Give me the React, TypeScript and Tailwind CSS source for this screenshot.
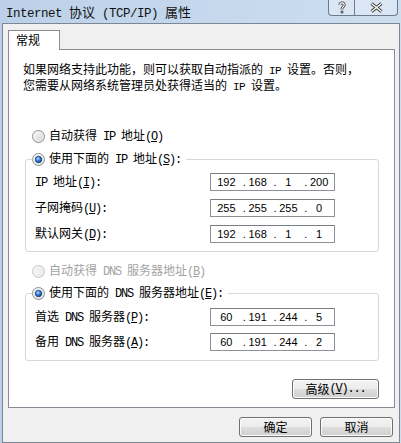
import React from "react";

const L = ({ children }: { children: React.ReactNode }) => (
  <span className="font-['Liberation_Mono',monospace] text-[12px] tracking-[-1.2px]">{children}</span>
);

const S = ({ children }: { children: React.ReactNode }) => (
  <span className="font-['Liberation_Mono',monospace] text-[11px] tracking-[-0.6px]">{children}</span>
);

const T = ({ children }: { children: React.ReactNode }) => (
  <span className="font-['Liberation_Mono',monospace] text-[12.5px] tracking-[-0.5px]">{children}</span>
);

function Radio({ checked = false, disabled = false }: { checked?: boolean; disabled?: boolean }) {
  return (
    <svg width="13" height="13" viewBox="0 0 13 13" className="shrink-0">
      <defs>
        <linearGradient id="rfill" x1="0" y1="0" x2="1" y2="1">
          <stop offset="0" stopColor="#fbfbfb" />
          <stop offset="1" stopColor="#d2d2d2" />
        </linearGradient>
        <linearGradient id="rfilld" x1="0" y1="0" x2="1" y2="1">
          <stop offset="0" stopColor="#f8f8f8" />
          <stop offset="1" stopColor="#e6e6e6" />
        </linearGradient>
        <radialGradient id="rdot" cx="0.4" cy="0.35" r="0.75">
          <stop offset="0" stopColor="#b7dcff" />
          <stop offset="0.45" stopColor="#3a83dc" />
          <stop offset="1" stopColor="#0d3273" />
        </radialGradient>
      </defs>
      <circle
        cx="6.5"
        cy="6.5"
        r="6"
        fill={disabled ? "url(#rfilld)" : "url(#rfill)"}
        stroke={disabled ? "#c4c4c4" : "#8f9092"}
      />
      <circle cx="6.5" cy="6.5" r="4.6" fill="none" stroke={disabled ? "#f4f4f4" : "#f2f2f2"} strokeWidth="0.8" />
      {checked && <circle cx="6.5" cy="6.5" r="3.2" fill="url(#rdot)" stroke="#173c78" strokeWidth="0.8" />}
    </svg>
  );
}

function IpBox({ parts }: { parts: string[] }) {
  return (
    <div className="w-[125px] h-[18px] border border-[#8d9095] border-t-[#7a7d82] bg-white grid grid-cols-4 font-['Liberation_Sans',sans-serif] text-[11px] leading-[16px] text-black">
      {parts.map((p, i) => (
        <div key={i} className="flex">
          {i > 0 ? <span className="w-0 ml-[1px] whitespace-nowrap">.</span> : null}
          <span className="flex-1 text-center whitespace-nowrap">{p}</span>
        </div>
      ))}
    </div>
  );
}

function Row({ label, parts }: { label: React.ReactNode; parts: string[] }) {
  return (
    <div className="flex items-center h-[18px]">
      <div className="text-[12px] leading-[14px] whitespace-nowrap">{label}</div>
      <div className="ml-auto">
        <IpBox parts={parts} />
      </div>
    </div>
  );
}

function Button({ children, w }: { children: React.ReactNode; w: string }) {
  return (
    <div
      className={`${w} h-[20px] flex items-center justify-center rounded-[3px] border border-[#707070] shadow-[inset_0_0_0_1px_#fbfbfb] bg-[linear-gradient(#f3f3f3_0%,#ececec_50%,#dedede_50%,#d0d0d0_100%)] text-[12px] leading-[14px] text-black whitespace-nowrap`}
    >
      {children}
    </div>
  );
}

export default function App() {
  return (
    <div className="w-[401px] h-[443px] flex flex-col overflow-hidden bg-[linear-gradient(to_right,#bcd1e9,#cddef0)] text-black font-['Noto_Sans_CJK_SC',sans-serif]">
      {/* Title bar */}
      <div className="h-[23px] shrink-0 flex items-start">
        <div className="ml-[6px] mt-[5px] text-[13px] leading-[14px] whitespace-nowrap text-[#111]">
          <T>Internet </T>协议<T> (TCP/IP) </T>属性
        </div>
        <div className="ml-auto mr-[3px] flex h-[16px] border border-t-0 border-[#6b7b8f] rounded-b-[4px] bg-[#dae6f3]">
          <div className="w-[26px] flex items-center justify-center border-r border-[#6b7b8f]">
            <svg width="8" height="13" viewBox="0 0 8 13">
              <path d="M1.8 4 C1.8 1.2 6.2 1.2 6.2 4 C6.2 5.8 4 5.8 4 7.8 L4 8.6" fill="none" stroke="#3d3d3d" strokeWidth="2.8" />
              <circle cx="4" cy="11" r="1.5" fill="#3d3d3d" />
              <path d="M1.8 4 C1.8 1.2 6.2 1.2 6.2 4 C6.2 5.8 4 5.8 4 7.8 L4 8.6" fill="none" stroke="#ffffff" strokeWidth="1.1" />
              <circle cx="4" cy="11" r="0.6" fill="#ffffff" />
            </svg>
          </div>
          <div className="w-[42px] flex items-center justify-center">
            <svg width="15" height="11" viewBox="0 0 15 11">
              <path d="M2.5 1.5 L12.5 9.5 M12.5 1.5 L2.5 9.5" fill="none" stroke="#3d3d3d" strokeWidth="3.2" />
              <path d="M2.5 1.5 L12.5 9.5 M12.5 1.5 L2.5 9.5" fill="none" stroke="#ffffff" strokeWidth="1.3" />
            </svg>
          </div>
        </div>
      </div>

      {/* Client area */}
      <div className="flex-1 ml-[2px] mr-[1px] border border-[#7b8795] bg-[#f0f0f0] flex flex-col pl-[5px] pr-[4px] pt-[6px]">
        {/* Tab */}
        <div className="flex">
          <div className="relative z-10 -mb-px h-[20px] w-[52px] border border-b-0 border-[#898c95] bg-white pl-[7px] pt-[2px] text-[12px] leading-[14px]">
            常规
          </div>
        </div>

        {/* Panel */}
        <div className="h-[359px] shrink-0 border border-[#898c95] bg-white flex flex-col">
          <div className="pt-[12px] pl-[14px] text-[12px] leading-[13px] whitespace-nowrap">
            <div>
              如果网络支持此功能，则可以获取自动指派的<S> IP </S>设置。否则，
            </div>
            <div>
              您需要从网络系统管理员处获得适当的<S> IP </S>设置。
            </div>
          </div>

          <div className="mt-[34px] ml-[23px] h-[16px] flex items-center gap-[4px] text-[12px] leading-[14px]">
            <Radio />
            <span>
              自动获得<L> IP </L>地址<L>(<u>O</u>)</L>
            </span>
          </div>

          <fieldset className="mt-[7px] ml-[16px] w-[354px] border border-[#d5d9de] rounded-[3px] p-0">
            <legend className="ml-[6px] p-0">
              <span className="flex items-center gap-[4px] h-[16px] text-[12px] leading-[14px] pr-[5px]">
                <Radio checked />
                <span>
                  使用下面的<L> IP </L>地址<L>(<u>S</u>):</L>
                </span>
              </span>
            </legend>
            <div className="flex flex-col gap-[8px] pt-[6px] pb-[8px] pl-[9px] pr-[43px]">
              <Row
                label={
                  <>
                    <L>IP </L>地址<L>(<u>I</u>):</L>
                  </>
                }
                parts={["192", "168", "1", "200"]}
              />
              <Row
                label={
                  <>
                    子网掩码<L>(<u>U</u>):</L>
                  </>
                }
                parts={["255", "255", "255", "0"]}
              />
              <Row
                label={
                  <>
                    默认网关<L>(<u>D</u>):</L>
                  </>
                }
                parts={["192", "168", "1", "1"]}
              />
            </div>
          </fieldset>

          <div className="mt-[11px] ml-[23px] h-[16px] flex items-center gap-[4px] text-[12px] leading-[14px] text-[#a3a3a3]">
            <Radio disabled />
            <span>
              自动获得<L> DNS </L>服务器地址<L>(<u>B</u>)</L>
            </span>
          </div>

          <fieldset className="mt-[6px] ml-[16px] w-[354px] border border-[#d5d9de] rounded-[3px] p-0">
            <legend className="ml-[6px] p-0">
              <span className="flex items-center gap-[4px] h-[16px] text-[12px] leading-[14px] pr-[5px]">
                <Radio checked />
                <span>
                  使用下面的<L> DNS </L>服务器地址<L>(<u>E</u>):</L>
                </span>
              </span>
            </legend>
            <div className="flex flex-col gap-[7px] pt-[7px] pb-[9px] pl-[9px] pr-[43px]">
              <Row
                label={
                  <>
                    首选<L> DNS </L>服务器<L>(<u>P</u>):</L>
                  </>
                }
                parts={["60", "191", "244", "5"]}
              />
              <Row
                label={
                  <>
                    备用<L> DNS </L>服务器<L>(<u>A</u>):</L>
                  </>
                }
                parts={["60", "191", "244", "2"]}
              />
            </div>
          </fieldset>

          <div className="mt-[18px] self-end mr-[15px]">
            <Button w="w-[87px]">
              高级<L>(<u>V</u>)...</L>
            </Button>
          </div>
        </div>

        {/* Bottom buttons */}
        <div className="mt-[9px] flex justify-end gap-[8px] mr-[2px]">
          <Button w="w-[73px]">确定</Button>
          <Button w="w-[73px]">取消</Button>
        </div>
      </div>
    </div>
  );
}
